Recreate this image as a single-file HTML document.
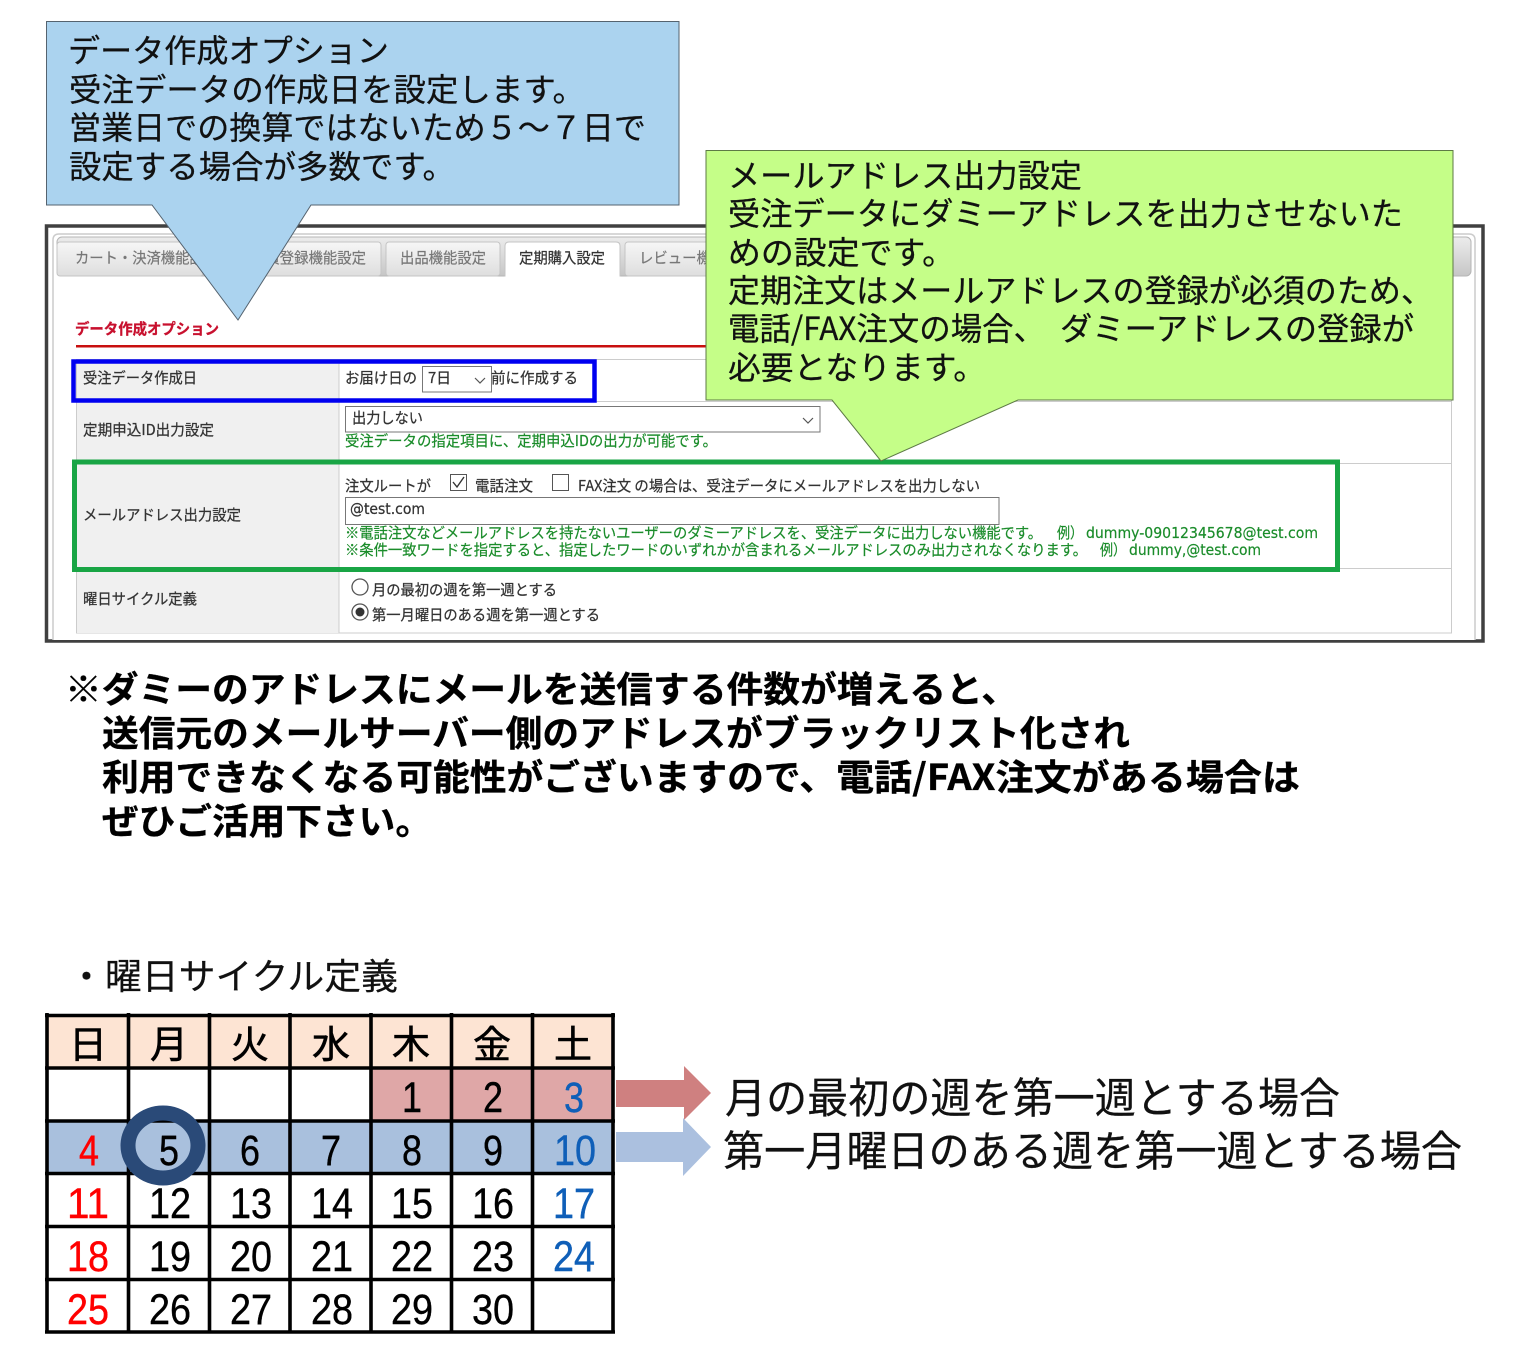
<!DOCTYPE html>
<html lang="ja"><head><meta charset="utf-8"><title>データ作成オプション</title>
<style>
html,body{margin:0;padding:0;background:#fff}
svg{display:block}
text{font-family:"Noto Sans CJK JP","Liberation Sans",sans-serif;white-space:pre}
.big{font-size:32px;fill:#111;stroke:#111;stroke-width:.25}
.s{font-size:15px;fill:#333;stroke:#333;stroke-width:.25}
.g{font-size:15px;fill:#1a8c2a;stroke:#1a8c2a;stroke-width:.2}
.d{font-family:"DejaVu Sans","Liberation Sans",sans-serif}
.t{font-size:15px;fill:#777;stroke:#777;stroke-width:.2}
.b{font-size:36px;font-weight:700;fill:#000;stroke:#000;stroke-width:.3}
.n{font-family:"Liberation Sans",sans-serif;font-size:43px;fill:#000;stroke:#000;stroke-width:.4;text-anchor:middle}
.h{font-size:38px;fill:#000;stroke:#000;stroke-width:.6;text-anchor:middle}
.n.r{fill:#f00;stroke:#f00}.n.u{fill:#0f5fb8;stroke:#0f5fb8}
</style></head>
<body>
<svg width="1518" height="1346" viewBox="0 0 1518 1346" xmlns="http://www.w3.org/2000/svg">
<defs>
<linearGradient id="bar" x1="0" y1="0" x2="0" y2="1"><stop offset="0" stop-color="#ececec"/><stop offset="1" stop-color="#c6c6c6"/></linearGradient>
<linearGradient id="tab" x1="0" y1="0" x2="0" y2="1"><stop offset="0" stop-color="#f6f6f6"/><stop offset="1" stop-color="#dedede"/></linearGradient>
</defs>
<rect width="1518" height="1346" fill="#fff"/>

<!-- framed screenshot -->
<rect x="46.500" y="226" width="1436.500" height="415" fill="#fff" stroke="#404040" stroke-width="3.500"/>
<path d="M53 640V240q0-6 6-6H1469q6 0 6 6V640" fill="#fff" stroke="#ccc" stroke-width="1.500"/>
<rect x="57" y="237" width="1414" height="39" rx="5" fill="url(#bar)" stroke="#b5b5b5"/>
<rect x="57" y="242" width="146" height="34" rx="3" fill="url(#tab)" stroke="#c4c4c4"/>
<rect x="262" y="242" width="119" height="34" rx="3" fill="url(#tab)" stroke="#c4c4c4"/>
<rect x="386" y="242" width="114" height="34" rx="3" fill="url(#tab)" stroke="#c4c4c4"/>
<path d="M505 277V246q0-4 4-4H616q4 0 4 4V277Z" fill="#fff" stroke="#c4c4c4"/>
<rect x="625" y="242" width="90" height="34" rx="3" fill="url(#tab)" stroke="#c4c4c4"/>
<rect x="56" y="276.500" width="1416" height="2" fill="#fff"/>
<rect x="505.500" y="274" width="114" height="4" fill="#fff"/>
<text class="t" x="75" y="263" textLength="143" lengthAdjust="spacingAndGlyphs">カート・決済機能設定</text>
<text class="t" x="251" y="263" textLength="115" lengthAdjust="spacingAndGlyphs">会員登録機能設定</text>
<text class="t" x="400" y="263" textLength="86" lengthAdjust="spacingAndGlyphs">出品機能設定</text>
<text class="s" x="519" y="263" textLength="86" lengthAdjust="spacingAndGlyphs">定期購入設定</text>
<text class="t" x="639" y="263" textLength="115" lengthAdjust="spacingAndGlyphs">レビュー機能設定</text>

<text x="75" y="334" font-size="15" font-weight="700" fill="#c8102e" stroke="#c8102e" stroke-width=".3" textLength="144" lengthAdjust="spacingAndGlyphs">データ作成オプション</text>
<rect x="76" y="345" width="640" height="2.500" fill="#c80f0f"/>

<!-- table -->
<rect x="76.500" y="359.500" width="1375" height="273.500" fill="#fff" stroke="#ccc"/>
<rect x="77" y="360" width="262" height="273" fill="#f0f0f0"/>
<path d="M339 360V633M76 401.500H1451M76 463.500H1451M76 568.500H1451" stroke="#ccc" stroke-width="1" fill="none"/>

<text class="s" x="83" y="383" textLength="114" lengthAdjust="spacingAndGlyphs">受注データ作成日</text>
<text class="s" x="83" y="435" textLength="131" lengthAdjust="spacingAndGlyphs">定期申込ID出力設定</text>
<text class="s" x="83" y="520" textLength="158" lengthAdjust="spacingAndGlyphs">メールアドレス出力設定</text>
<text class="s" x="83" y="604" textLength="114" lengthAdjust="spacingAndGlyphs">曜日サイクル定義</text>

<text class="s" x="345" y="383" textLength="72" lengthAdjust="spacingAndGlyphs">お届け日の</text>
<rect x="422.500" y="366.500" width="69" height="25.500" fill="#fff" stroke="#777"/>
<text class="s" x="428" y="383" textLength="23" lengthAdjust="spacingAndGlyphs">7日</text>
<path d="M475 378l5 5 5-5" fill="none" stroke="#555" stroke-width="1.200"/>
<text class="s" x="491" y="383" textLength="87" lengthAdjust="spacingAndGlyphs">前に作成する</text>

<rect x="345.500" y="406.500" width="474.500" height="25.500" fill="#fff" stroke="#777"/>
<text class="s" x="352" y="423" textLength="71" lengthAdjust="spacingAndGlyphs">出力しない</text>
<path d="M803 418l5 5 5-5" fill="none" stroke="#555" stroke-width="1.200"/>
<text class="g" x="345" y="446" textLength="372" lengthAdjust="spacingAndGlyphs">受注データの指定項目に、定期申込IDの出力が可能です。</text>

<text class="s" x="345" y="491" textLength="86" lengthAdjust="spacingAndGlyphs">注文ルートが</text>
<rect x="450.500" y="474.500" width="16" height="16" fill="#fff" stroke="#555"/>
<path d="M453 482l4 5 7-10" fill="none" stroke="#333" stroke-width="1.400"/>
<text class="s" x="475" y="491" textLength="58" lengthAdjust="spacingAndGlyphs">電話注文</text>
<rect x="552.500" y="474.500" width="16" height="16" fill="#fff" stroke="#555"/>
<text class="s" x="578" y="491" textLength="402" lengthAdjust="spacingAndGlyphs">FAX注文 の場合は、受注データにメールアドレスを出力しない</text>
<rect x="345.500" y="497.500" width="653.500" height="27" fill="#fff" stroke="#777"/>
<text class="s d" x="350" y="514" textLength="75" lengthAdjust="spacingAndGlyphs">@test.com</text>

<text class="g" x="345" y="538" textLength="697" lengthAdjust="spacingAndGlyphs">※電話注文などメールアドレスを持たないユーザーのダミーアドレスを、受注データに出力しない機能です。</text>
<text class="g" x="1057" y="538" textLength="26" lengthAdjust="spacingAndGlyphs">例）</text>
<text class="g d" x="1086" y="538" textLength="232" lengthAdjust="spacingAndGlyphs">dummy-09012345678@test.com</text>
<text class="g" x="345" y="555" textLength="742" lengthAdjust="spacingAndGlyphs">※条件一致ワードを指定すると、指定したワードのいずれかが含まれるメールアドレスのみ出力されなくなります。</text>
<text class="g" x="1100" y="555" textLength="26" lengthAdjust="spacingAndGlyphs">例）</text>
<text class="g d" x="1129" y="555" textLength="132" lengthAdjust="spacingAndGlyphs">dummy,@test.com</text>

<circle cx="360" cy="587" r="8" fill="#fff" stroke="#555" stroke-width="1.300"/>
<text class="s" x="372" y="595" textLength="185" lengthAdjust="spacingAndGlyphs">月の最初の週を第一週とする</text>
<circle cx="360" cy="612" r="8" fill="#fff" stroke="#555" stroke-width="1.300"/>
<circle cx="360" cy="612" r="4.500" fill="#333"/>
<text class="s" x="372" y="620" textLength="228" lengthAdjust="spacingAndGlyphs">第一月曜日のある週を第一週とする</text>

<!-- highlight boxes -->
<rect x="73.500" y="361.500" width="521" height="39" fill="none" stroke="#0000f0" stroke-width="4.500"/>
<rect x="74.500" y="462" width="1263" height="107.500" fill="none" stroke="#19a545" stroke-width="5"/>

<!-- blue callout -->
<path d="M46.500 21.500H679V205H311L238 320 152 205H46.500Z" fill="#abd3ef" stroke="#55636f" stroke-width="1"/>
<text class="big" x="68" y="62" textLength="321" lengthAdjust="spacingAndGlyphs">データ作成オプション</text>
<text class="big" x="69" y="101" textLength="516" lengthAdjust="spacingAndGlyphs">受注データの作成日を設定します。</text>
<text class="big" x="69" y="139" textLength="577" lengthAdjust="spacingAndGlyphs">営業日での換算ではないため５～７日で</text>
<text class="big" x="69" y="178" textLength="386" lengthAdjust="spacingAndGlyphs">設定する場合が多数です。</text>

<!-- green callout -->
<path d="M706 150.500H1453V400H1018L881 461 832 400H706Z" fill="#c5fe88" stroke="#5d7a45" stroke-width="1"/>
<text class="big" x="728" y="187" textLength="354" lengthAdjust="spacingAndGlyphs">メールアドレス出力設定</text>
<text class="big" x="728" y="225" textLength="675" lengthAdjust="spacingAndGlyphs">受注データにダミーアドレスを出力させないた</text>
<text class="big" x="728" y="264" textLength="227" lengthAdjust="spacingAndGlyphs">めの設定です。</text>
<text class="big" x="728" y="302" textLength="705" lengthAdjust="spacingAndGlyphs">定期注文はメールアドレスの登録が必須のため、</text>
<text class="big" x="728" y="340" textLength="317" lengthAdjust="spacingAndGlyphs">電話/FAX注文の場合、</text>
<text class="big" x="1060" y="340" textLength="354" lengthAdjust="spacingAndGlyphs">ダミーアドレスの登録が</text>
<text class="big" x="728" y="379" textLength="258" lengthAdjust="spacingAndGlyphs">必要となります。</text>

<!-- note -->
<text class="b" x="65" y="702" textLength="953" lengthAdjust="spacingAndGlyphs">※ダミーのアドレスにメールを送信する件数が増えると、</text>
<text class="b" x="102" y="746" textLength="1028" lengthAdjust="spacingAndGlyphs">送信元のメールサーバー側のアドレスがブラックリスト化され</text>
<text class="b" x="102" y="790" textLength="734" lengthAdjust="spacingAndGlyphs">利用できなくなる可能性がございますので、</text>
<text class="b" x="836" y="790" textLength="464" lengthAdjust="spacingAndGlyphs">電話/FAX注文がある場合は</text>
<text class="b" x="102" y="834" textLength="330" lengthAdjust="spacingAndGlyphs">ぜひご活用下さい。</text>

<text x="68" y="989" font-size="36" fill="#111" stroke="#111" stroke-width=".2" textLength="330" lengthAdjust="spacingAndGlyphs">・曜日サイクル定義</text>

<!-- calendar -->
<rect x="46" y="1015" width="567" height="53" fill="#fde4d3"/>
<rect x="371" y="1068" width="242" height="53" fill="#dfa7a7"/>
<rect x="46" y="1121" width="567" height="52" fill="#a9c0dd"/>
<path d="M47 1013V1333M128.500 1013V1333M209.500 1013V1333M290 1013V1333M371 1013V1333M451.500 1013V1333M532.500 1013V1333M613 1013V1333" stroke="#000" stroke-width="3.600" fill="none"/>
<path d="M45 1015.500H615M45 1068H615M45 1121H615M45 1173.500H615M45 1226.500H615M45 1279.500H615M45 1332H615" stroke="#000" stroke-width="3.600" fill="none"/>

<g>
<text class="h" x="88" y="1058">日</text><text class="h" x="169" y="1058">月</text><text class="h" x="250" y="1058">火</text><text class="h" x="331" y="1058">水</text><text class="h" x="411" y="1058">木</text><text class="h" x="492" y="1058">金</text><text class="h" x="573" y="1058">土</text>
</g>
<g>
<text class="n" x="412" y="1112" textLength="20" lengthAdjust="spacingAndGlyphs">1</text>
<text class="n" x="493" y="1112" textLength="20" lengthAdjust="spacingAndGlyphs">2</text>
<text class="n u" x="574" y="1112" textLength="20" lengthAdjust="spacingAndGlyphs">3</text>
<text class="n r" x="89" y="1165" textLength="20" lengthAdjust="spacingAndGlyphs">4</text>
<text class="n" x="169" y="1165" textLength="20" lengthAdjust="spacingAndGlyphs">5</text>
<text class="n" x="250" y="1165" textLength="20" lengthAdjust="spacingAndGlyphs">6</text>
<text class="n" x="331" y="1165" textLength="20" lengthAdjust="spacingAndGlyphs">7</text>
<text class="n" x="412" y="1165" textLength="20" lengthAdjust="spacingAndGlyphs">8</text>
<text class="n" x="493" y="1165" textLength="20" lengthAdjust="spacingAndGlyphs">9</text>
<text class="n u" x="575" y="1165" textLength="42" lengthAdjust="spacingAndGlyphs">10</text>
<text class="n r" x="88" y="1218" textLength="42" lengthAdjust="spacingAndGlyphs">11</text>
<text class="n" x="170" y="1218" textLength="42" lengthAdjust="spacingAndGlyphs">12</text>
<text class="n" x="251" y="1218" textLength="42" lengthAdjust="spacingAndGlyphs">13</text>
<text class="n" x="332" y="1218" textLength="42" lengthAdjust="spacingAndGlyphs">14</text>
<text class="n" x="412" y="1218" textLength="42" lengthAdjust="spacingAndGlyphs">15</text>
<text class="n" x="493" y="1218" textLength="42" lengthAdjust="spacingAndGlyphs">16</text>
<text class="n u" x="574" y="1218" textLength="42" lengthAdjust="spacingAndGlyphs">17</text>
<text class="n r" x="88" y="1271" textLength="42" lengthAdjust="spacingAndGlyphs">18</text>
<text class="n" x="170" y="1271" textLength="42" lengthAdjust="spacingAndGlyphs">19</text>
<text class="n" x="251" y="1271" textLength="42" lengthAdjust="spacingAndGlyphs">20</text>
<text class="n" x="332" y="1271" textLength="42" lengthAdjust="spacingAndGlyphs">21</text>
<text class="n" x="412" y="1271" textLength="42" lengthAdjust="spacingAndGlyphs">22</text>
<text class="n" x="493" y="1271" textLength="42" lengthAdjust="spacingAndGlyphs">23</text>
<text class="n u" x="574" y="1271" textLength="42" lengthAdjust="spacingAndGlyphs">24</text>
<text class="n r" x="88" y="1324" textLength="42" lengthAdjust="spacingAndGlyphs">25</text>
<text class="n" x="170" y="1324" textLength="42" lengthAdjust="spacingAndGlyphs">26</text>
<text class="n" x="251" y="1324" textLength="42" lengthAdjust="spacingAndGlyphs">27</text>
<text class="n" x="332" y="1324" textLength="42" lengthAdjust="spacingAndGlyphs">28</text>
<text class="n" x="412" y="1324" textLength="42" lengthAdjust="spacingAndGlyphs">29</text>
<text class="n" x="493" y="1324" textLength="42" lengthAdjust="spacingAndGlyphs">30</text>
</g>
<ellipse cx="163" cy="1145.500" rx="35" ry="32.500" fill="none" stroke="#2a4a78" stroke-width="15"/>

<!-- arrows -->
<path d="M616 1080H684V1066L711 1093 684 1120V1107H616Z" fill="#cf8080"/>
<path d="M616 1132H683V1118L711 1147 683 1176V1162H616Z" fill="#abc0df"/>

<text x="725" y="1113" font-size="42" fill="#111" stroke="#111" stroke-width=".25" textLength="615" lengthAdjust="spacingAndGlyphs">月の最初の週を第一週とする場合</text>
<text x="723" y="1166" font-size="42" fill="#111" stroke="#111" stroke-width=".25" textLength="739" lengthAdjust="spacingAndGlyphs">第一月曜日のある週を第一週とする場合</text>
</svg>
</body></html>
